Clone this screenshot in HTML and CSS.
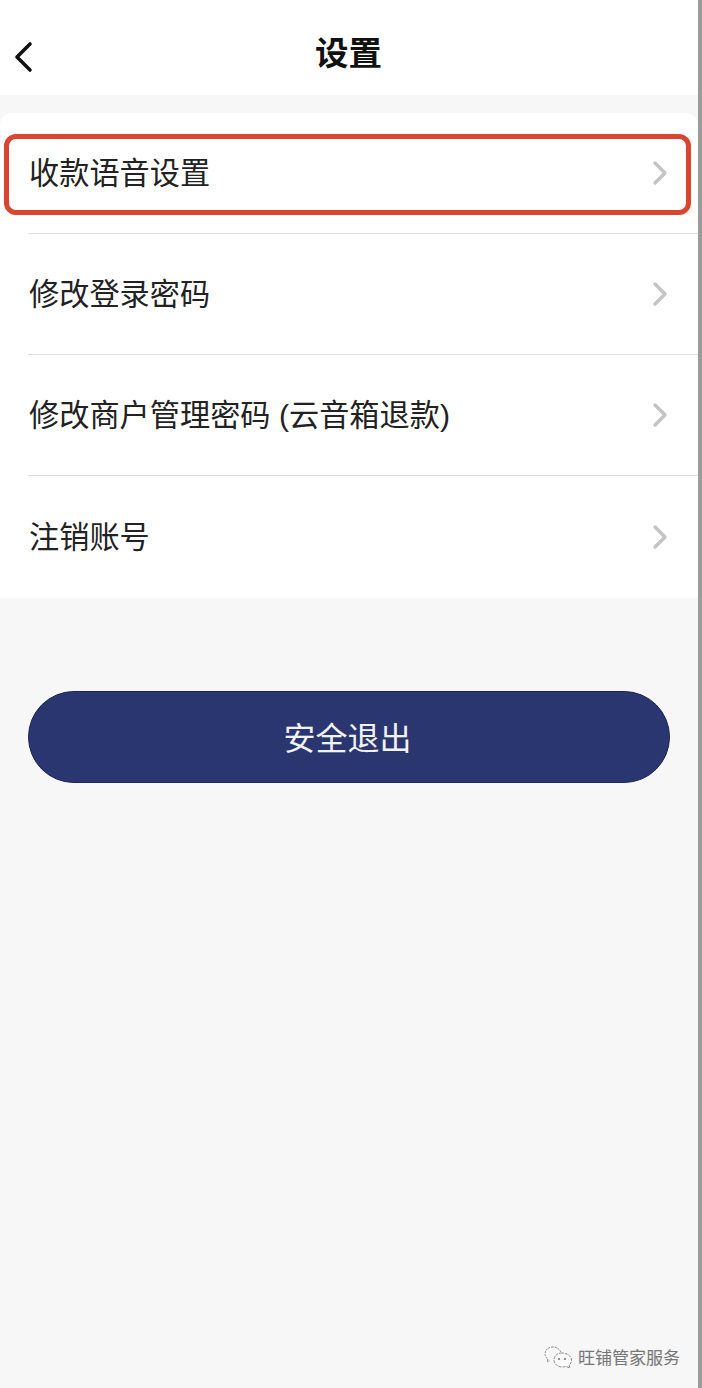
FILE: index.html
```html
<!DOCTYPE html>
<html lang="zh">
<head>
    <meta charset="utf-8">
    <title>设置</title>
    <link rel="stylesheet" href="styles.css">
</head>
<body>
<div class="screen">
    <div class="header">
        <svg class="back" width="20" height="32" viewBox="0 0 20 32">
            <path d="M17 3 L4 16 L17 29" fill="none" stroke="#111" stroke-width="3.6" stroke-linecap="round" stroke-linejoin="round"/>
        </svg>
        <div class="title">设置</div>
    </div>
    <div class="list">
        <div class="row">
            <span class="row-text">收款语音设置</span>
            <svg class="chevron" width="16" height="26" viewBox="0 0 16 26"><path d="M3 3 L13 13 L3 23" fill="none" stroke="#c4c4c6" stroke-width="3.4" stroke-linecap="round" stroke-linejoin="round"/></svg>
            <div class="highlight"></div>
        </div>
        <div class="row">
            <span class="row-text">修改登录密码</span>
            <svg class="chevron" width="16" height="26" viewBox="0 0 16 26"><path d="M3 3 L13 13 L3 23" fill="none" stroke="#c4c4c6" stroke-width="3.4" stroke-linecap="round" stroke-linejoin="round"/></svg>
        </div>
        <div class="row">
            <span class="row-text">修改商户管理密码 (云音箱退款)</span>
            <svg class="chevron" width="16" height="26" viewBox="0 0 16 26"><path d="M3 3 L13 13 L3 23" fill="none" stroke="#c4c4c6" stroke-width="3.4" stroke-linecap="round" stroke-linejoin="round"/></svg>
        </div>
        <div class="row">
            <span class="row-text">注销账号</span>
            <svg class="chevron" width="16" height="26" viewBox="0 0 16 26"><path d="M3 3 L13 13 L3 23" fill="none" stroke="#c4c4c6" stroke-width="3.4" stroke-linecap="round" stroke-linejoin="round"/></svg>
        </div>
    </div>
    <div class="logout"><span class="logout-text">安全退出</span></div>
    <div class="watermark">
        <svg width="30" height="24" viewBox="0 0 30 24">
            <path d="M10 2 C5 2 2 5 2 9 C2 11 3 13 5 14 L4 17 L7 15.5 M18 7 C16 3.500 13 2 10 2" fill="none" stroke="#8d8d8d" stroke-width="1" stroke-dasharray="2 1"/>
            <path d="M19 8 C14 8 11 11 11 15 C11 19 15 22 19 22 C21 22 22 21.500 23 21.500 L27 23 L26 20 C28 18.500 28.500 17 28.500 15 C28.500 11 24 8 19 8 Z" fill="#fafafa" stroke="#8d8d8d" stroke-width="1" stroke-dasharray="3 1"/>
            <circle cx="16" cy="14" r="1.100" fill="#777"/>
            <circle cx="22" cy="14" r="1.100" fill="#777"/>
        </svg>
        <span class="watermark-text">旺铺管家服务</span>
    </div>
</div>
</body>
</html>
```

FILE: styles.css
```css
* {
    box-sizing: border-box;
}
html, body {
    margin: 0;
    padding: 0;
}
body {
    width: 702px;
    height: 1388px;
    overflow: hidden;
    font-family: "Liberation Sans", "Noto Sans CJK SC", sans-serif;
    background: #f7f7f8;
}
.screen {
    position: relative;
    width: 702px;
    height: 1388px;
    border-right: 4px solid #9b9b9b;
    background: #f7f7f8;
}
.header {
    position: relative;
    height: 95px;
    display: flex;
    align-items: center;
    justify-content: center;
    background: #fff;
}
.back {
    position: absolute;
    left: 13px;
    top: 41px;
}
.title {
    font-size: 33.5px;
    font-weight: 700;
    color: #111;
    margin-top: 6px;
    margin-right: 1px;
}
.list {
    margin-top: 18px;
    height: 485px;
    background: #fff;
    border-radius: 12px 12px 0 0;
    display: flex;
    flex-direction: column;
}
.row {
    position: relative;
    height: 121px;
    display: flex;
    align-items: center;
    justify-content: space-between;
    margin-left: 28px;
    padding: 0 30px 0 1px;
    border-bottom: 1px solid #dfdfe0;
    font-size: 30.2px;
    color: #222;
}
.row:last-child {
    flex: 1;
    border-bottom: none;
}
.row-text {
    margin-bottom: 5px;
}
.highlight {
    position: absolute;
    left: -24px;
    top: 21px;
    width: 687px;
    height: 81px;
    border: 5px solid #d9452e;
    border-radius: 12px;
}
.logout {
    margin: 93px 28px 0 28px;
    width: 642px;
    height: 92px;
    display: flex;
    align-items: center;
    justify-content: center;
    background: #2a3670;
    border: 1px solid #1c2557;
    border-radius: 46px;
    color: #f2f2f5;
    font-size: 32px;
}
.logout-text {
    margin: 0 3px 2px 0;
}
.watermark {
    position: absolute;
    right: 18px;
    bottom: 19px;
    display: flex;
    align-items: center;
    gap: 5px;
}
.watermark-text {
    font-size: 17px;
    color: #777;
    text-shadow: 1px 0 0 #eee;
}
```
